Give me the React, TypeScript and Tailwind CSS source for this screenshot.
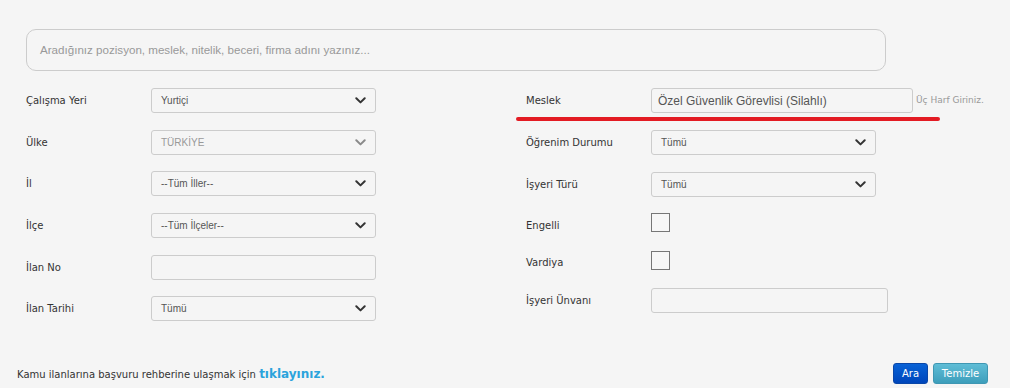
import React from 'react';

const labelFont = "font-['DejaVu_Sans',Tahoma,sans-serif]";
const fieldFont = "font-['Liberation_Sans',Arial,sans-serif]";

function Chevron({ light }: { light?: boolean }) {
  return (
    <svg width="11" height="7" viewBox="0 0 11 7" className="mr-[1px] shrink-0">
      <polyline
        points="1.3,1.3 5.5,5.4 9.7,1.3"
        fill="none"
        stroke={light ? '#8a8a8a' : '#333'}
        strokeWidth="2"
        strokeLinecap="round"
        strokeLinejoin="round"
      />
    </svg>
  );
}

function Select({ value, disabled }: { value: string; disabled?: boolean }) {
  return (
    <div
      className={`flex h-[25px] w-[225px] items-center justify-between rounded-[3px] border border-[#ccc] pl-[9px] pr-[8px] text-[10px] ${fieldFont} ${
        disabled ? 'text-[#999]' : 'text-[#555]'
      }`}
    >
      <span>{value}</span>
      <Chevron light={disabled} />
    </div>
  );
}

function TextInput({ w }: { w: string }) {
  return <div className={`h-[25px] ${w} rounded-[3px] border border-[#ccc]`} />;
}

function Checkbox() {
  return <div className="h-[19px] w-[19px] border border-[#777] bg-[#f7f7f7]" />;
}

function Row({
  label,
  children,
  h = 'h-[25px]',
  lift = '',
}: {
  label: string;
  children: React.ReactNode;
  h?: string;
  lift?: string;
}) {
  return (
    <div className={`flex ${h} items-center`}>
      <div className={`w-[125px] text-[10px] text-[#333] ${labelFont} ${lift}`}>{label}</div>
      {children}
    </div>
  );
}

export default function App() {
  return (
    <div className="relative h-[388px] w-[1010px] overflow-hidden bg-[#f5f5f5]">
      <div className="pl-[26px] pt-[29px]">
        <div
          className={`flex h-[42px] w-[860px] items-center rounded-[10px] border border-[#ccc] px-[13px] text-[11.6px] text-[#999] ${fieldFont}`}
        >
          Aradığınız pozisyon, meslek, nitelik, beceri, firma adını yazınız...
        </div>

        <div className="mt-[17px] flex">
          <div className="flex w-[500px] flex-col gap-[16.7px]">
            <Row label="Çalışma Yeri">
              <Select value="Yurtiçi" />
            </Row>
            <Row label="Ülke">
              <Select value="TÜRKİYE" disabled />
            </Row>
            <Row label="İl">
              <Select value="--Tüm İller--" />
            </Row>
            <Row label="İlçe">
              <Select value="--Tüm İlçeler--" />
            </Row>
            <Row label="İlan No">
              <TextInput w="w-[225px]" />
            </Row>
            <Row label="İlan Tarihi">
              <Select value="Tümü" />
            </Row>
          </div>

          <div className="relative flex flex-col">
            <Row label="Meslek">
              <div
                className={`flex h-[25px] w-[262px] items-center rounded-[3px] border border-[#ccc] px-[6px] text-[12px] text-[#555] ${fieldFont}`}
              >
                Özel Güvenlik Görevlisi (Silahlı)
              </div>
              <span className={`ml-[3px] text-[9px] text-[#999] ${labelFont}`}>Üç Harf Giriniz.</span>
            </Row>
            <div className="absolute left-[-10px] top-[29px] h-[4px] w-[424px] rounded-full bg-[#e31b23]" />
            <div className="mt-[17px]">
              <Row label="Öğrenim Durumu">
                <Select value="Tümü" />
              </Row>
            </div>
            <div className="mt-[17px]">
              <Row label="İşyeri Türü">
                <Select value="Tümü" />
              </Row>
            </div>
            <div className="mt-[16px]">
              <Row label="Engelli" h="h-[19px]" lift="pt-[5px]">
                <Checkbox />
              </Row>
            </div>
            <div className="mt-[19px]">
              <Row label="Vardiya" h="h-[19px]" lift="pt-[4px]">
                <Checkbox />
              </Row>
            </div>
            <div className="mt-[18px]">
              <Row label="İşyeri Ünvanı">
                <TextInput w="w-[237px]" />
              </Row>
            </div>
          </div>
        </div>
      </div>

      <div className="mt-[42px] flex items-center justify-between pl-[17px] pr-[22px]">
        <div className={`text-[10px] text-[#333] ${labelFont}`}>
          Kamu ilanlarına başvuru rehberine ulaşmak için{' '}
          <span className="text-[12px] font-bold text-[#2ba3dc]">tıklayınız.</span>
        </div>
        <div className={`flex gap-[5px] ${labelFont}`}>
          <button className="h-[21px] w-[35px] rounded-[3px] border border-[#0a47a8] bg-gradient-to-b from-[#0a62d6] to-[#0046bb] text-[10px] text-white">
            Ara
          </button>
          <button className="h-[21px] w-[55px] rounded-[3px] border border-[#3f97b3] bg-gradient-to-b from-[#5fbdd6] to-[#3d9ebb] text-[10px] text-white">
            Temizle
          </button>
        </div>
      </div>
    </div>
  );
}
